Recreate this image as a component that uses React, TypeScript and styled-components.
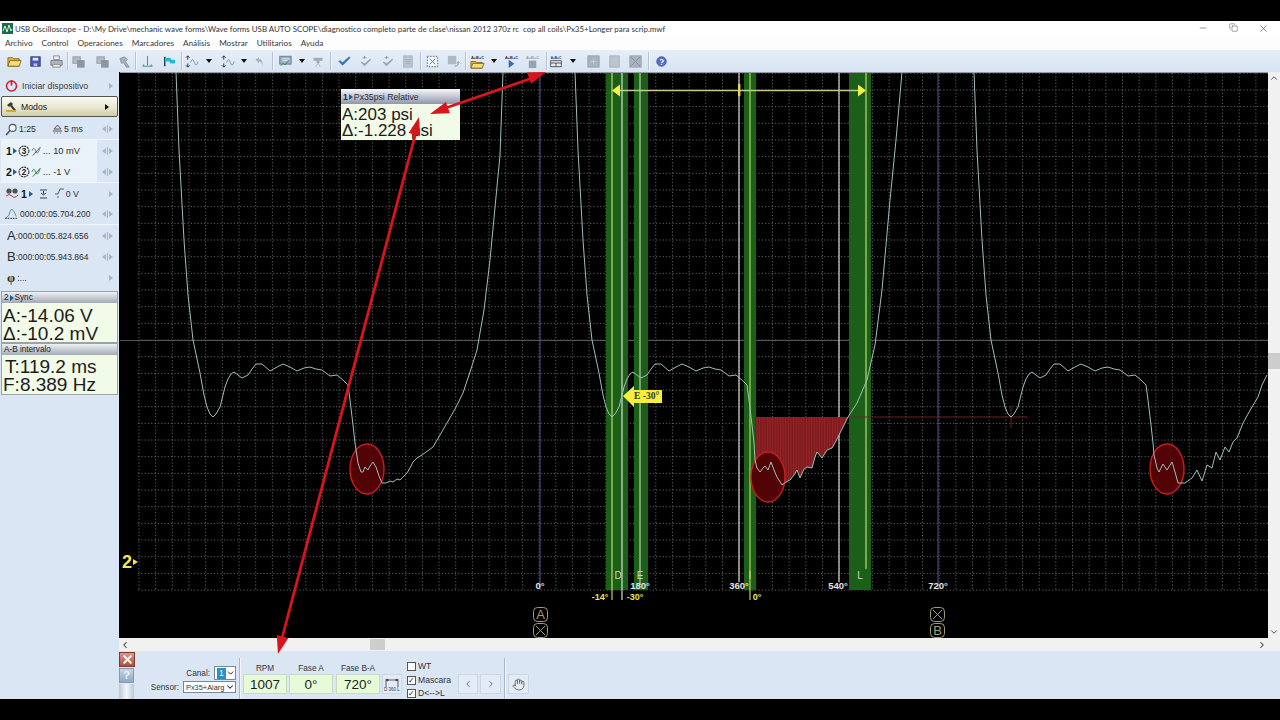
import React from "react";
import styled, { createGlobalStyle } from "styled-components";
import { Minus, Copy, X, ChevronDown, ChevronLeft, ChevronRight, ChevronUp, Hand } from "lucide-react";

const GlobalStyle = createGlobalStyle`
  html, body { margin: 0; padding: 0; background: #000; overflow: hidden; }
  * { box-sizing: border-box; }
`;

type Pt = [number, number];
const toPath = (pts: Pt[]) => pts.map((p, i) => `${i ? "L" : "M"}${p[0]} ${p[1]}`).join(" ");
const shift = (pts: Pt[], dx: number): Pt[] => pts.map(([x, y]) => [x + dx, y] as Pt);

// one cycle from the top of the screen, down the trough and over the plateau
const cycleHead: Pt[] = [
  [176, 72], [179, 150], [184, 240], [188, 295], [193, 340], [200, 373], [204, 395], [207, 407], [210, 414], [213, 417], [216, 414],
  [220, 407], [225, 387], [228, 379], [231, 374], [234, 372], [238, 375], [242, 378], [248, 375], [252, 369], [256, 364], [262, 364],
  [270, 371], [277, 367], [283, 364], [290, 367], [297, 371], [304, 368], [310, 367], [316, 369], [322, 370], [330, 376], [337, 375],
  [343, 380], [348, 385], [350, 400], [353, 425], [355, 443],
];
const smoothTail: Pt[] = [
  [358, 463], [361, 472], [363, 472], [365, 467], [368, 470], [370, 466], [373, 462], [376, 467], [379, 476], [382, 483], [386, 483], [390, 481],
  [393, 482], [397, 479], [400, 480], [404, 476], [407, 473], [410, 468], [413, 462], [417, 458], [422, 455], [433, 447], [440, 435],
  [447, 423], [455, 409], [463, 393], [470, 372], [477, 350], [484, 310], [490, 260], [500, 155], [503, 72],
];
const midTail: Pt[] = [
  [755, 460], [757, 468], [760, 472], [763, 468], [765, 466], [768, 470], [771, 462], [774, 470], [777, 477], [782, 485], [786, 482], [790, 480],
  [794, 475], [797, 470], [800, 478], [804, 469], [807, 467], [812, 468], [815, 457], [817, 452], [822, 458], [827, 450], [832, 448],
  [836, 441], [840, 433], [848, 417], [857, 403], [867, 380], [875, 345], [882, 290], [890, 200], [896, 140], [902, 72],
];
const lastTail: Pt[] = [
  [1154, 455], [1157, 468], [1159, 472], [1163, 464], [1167, 470], [1172, 462], [1175, 472], [1178, 483], [1185, 483], [1192, 478], [1197, 470],
  [1202, 481], [1207, 465], [1212, 468], [1216, 452], [1220, 460], [1225, 447], [1229, 452], [1233, 442], [1237, 438], [1243, 423],
  [1248, 414], [1252, 407], [1258, 397], [1262, 385], [1267, 375],
];
const waves = [
  [...cycleHead, ...smoothTail],
  [...shift(cycleHead, 399), ...midTail],
  [...shift(cycleHead, 798), ...lastTail],
];
const shade: Pt[] = [[755, 417], [848, 417], ...midTail.slice(0, 26).reverse()];

const bands = [[606, 22], [634, 14], [744, 12], [849, 22]];
const cursorLines = [
  { x: 612, to: 600, c: "#cbe874" }, { x: 622, to: 600, c: "#e8eee0" }, { x: 640, to: 585, c: "#c7d8c2" },
  { x: 739, to: 582, c: "#ececec" }, { x: 750, to: 600, c: "#bfe06a" }, { x: 839, to: 582, c: "#ececec" }, { x: 866, to: 569, c: "#cbe874" },
];
const gridX = Array.from({ length: 68 }, (_, i) => 139 + i * 16.67);
const gridY = Array.from({ length: 32 }, (_, i) => 73.3 + i * 16.67);

const arrowHead = (tip: Pt, from: Pt, len: number, wid: number) => {
  const dx = from[0] - tip[0];
  const dy = from[1] - tip[1];
  const d = Math.hypot(dx, dy);
  const ux = dx / d;
  const uy = dy / d;
  const bx = tip[0] + ux * len;
  const by = tip[1] + uy * len;
  return `${tip[0]},${tip[1]} ${bx - uy * wid},${by + ux * wid} ${bx + uy * wid},${by - ux * wid}`;
};

const AppFrame = styled.div`
  position: relative;
  width: 1280px;
  height: 720px;
  display: flex;
  flex-direction: column;
  background: #000;
  font-family: "Liberation Sans", Arial, sans-serif;
  color: #222;
`;
const Letterbox = styled.div`
  height: 21px;
  flex: none;
  background: #000;
`;
const TitleBar = styled.div`
  height: 15px;
  flex: none;
  background: #fff;
  display: flex;
  align-items: center;
  padding-left: 2px;
  gap: 2px;
  font-family: Lato, "Open Sans", sans-serif;
  font-size: 7.93px;
  color: #333;
  white-space: pre;
`;
const WinButtons = styled.div`
  margin-left: auto;
  display: flex;
  color: #333;
`;
const WinButton = styled.span`
  width: 30px;
  display: flex;
  justify-content: center;
  transform: translateX(-2px);
`;
const MenuBar = styled.div`
  height: 14px;
  flex: none;
  background: #fdfdfe;
  display: flex;
  align-items: center;
  padding-left: 5px;
  gap: 9px;
  font-family: Lato, "Open Sans", sans-serif;
  font-size: 8.2px;
  color: #3a3a3a;
`;
const Toolbar = styled.div`
  height: 22px;
  flex: none;
  background: linear-gradient(#e6eef8, #d8e4f3);
  display: flex;
  align-items: center;
  padding-left: 4px;
`;
const ToolSlot = styled.span<{ $w: number }>`
  width: ${(p) => p.$w}px;
  flex: none;
  display: flex;
  justify-content: center;
  align-items: center;
`;
const ToolSep = styled.span`
  width: 1px;
  height: 18px;
  background: #b6c2d2;
  box-shadow: 1px 0 0 #f3f7fc;
`;
const DropCaret = styled.span`
  width: 0;
  height: 0;
  border-left: 3.5px solid transparent;
  border-right: 3.5px solid transparent;
  border-top: 4px solid #111;
`;
const Main = styled.div`
  flex: 1;
  min-height: 0;
  display: flex;
`;
const Sidebar = styled.aside`
  width: 119px;
  flex: none;
  background: #dbe6f4;
  padding-top: 3px;
  display: flex;
  flex-direction: column;
  font-size: 8.7px;
  color: #2d2d2d;
`;
const SideRow = styled.div<{ $line?: boolean }>`
  height: 21px;
  flex: none;
  display: flex;
  align-items: center;
  gap: 2px;
  padding: 0 6px 0 5px;
  white-space: nowrap;
  border-bottom: ${(p) => (p.$line ? "1px solid #f2f6fb" : "none")};
`;
const LeadText = styled.span`
  margin-left: 2px;
  color: #3a3a3a;
`;
const ModeButton = styled.div`
  height: 21px;
  flex: none;
  margin: 0 1px;
  display: flex;
  align-items: center;
  gap: 3px;
  padding: 0 8px 0 3px;
  background: linear-gradient(#fbfbf6, #e9e7cf 55%, #cfcca8);
  border: 1px solid #55554a;
  border-radius: 2px;
  color: #222;
`;
const RowGap = styled.div`
  height: 2px;
  flex: none;
`;
const ChannelBlock = styled.div`
  flex: none;
  border-bottom: 1px solid #f2f6fb;
`;
const ChannelRow = styled.div`
  height: 21px;
  display: flex;
  align-items: center;
  padding-right: 6px;
`;
const ChannelBody = styled.div`
  width: 96px;
  height: 100%;
  margin-left: 1px;
  background: #e9f1f9;
  display: flex;
  align-items: center;
  gap: 1px;
  padding-left: 5px;
  font-size: 9.3px;
`;
const BigNum = styled.b`
  font-size: 10.5px;
  color: #111;
`;
const BlueTip = styled.span`
  width: 0;
  height: 0;
  border-top: 3px solid transparent;
  border-bottom: 3px solid transparent;
  border-left: 4px solid #1c5d94;
`;
const Stepper = styled.span`
  margin-left: auto;
  display: flex;
  align-items: center;
  gap: 1px;
`;
const Tri = styled.span<{ $left?: boolean; $dark?: boolean }>`
  width: 0;
  height: 0;
  border-top: 3.5px solid transparent;
  border-bottom: 3.5px solid transparent;
  border-left: ${(p) => (p.$left ? "none" : `4px solid ${p.$dark ? "#111" : "#a9b4c2"}`)};
  border-right: ${(p) => (p.$left ? "4px solid #a9b4c2" : "none")};
`;
const TriBar = styled.span`
  width: 1px;
  height: 8px;
  background: #a9b4c2;
`;
const SpacedValue = styled.span`
  margin-left: 14px;
  display: flex;
  align-items: center;
  gap: 1px;
`;
const TimeText = styled.span`
  font-size: 8.45px;
`;
const CursorName = styled.span`
  font-size: 13px;
  margin-left: 2px;
  margin-right: -2px;
`;
const PhiName = styled.span`
  font-family: "Liberation Serif", serif;
  font-weight: bold;
  font-size: 13px;
  margin-left: 2px;
`;
const Readout = styled.div<{ $first?: boolean }>`
  margin: ${(p) => (p.$first ? "3px" : "0")} 1px 0;
  width: 117px;
  flex: none;
  border: 1px solid #9aa2ac;
  background: #f2fae8;
`;
const ReadoutTitle = styled.div`
  height: 11px;
  background: linear-gradient(#eef1f5, #a3aab5);
  font-size: 8.2px;
  line-height: 11px;
  padding-left: 2px;
  color: #1e1e1e;
  display: flex;
  align-items: center;
  gap: 1px;
`;
const ReadoutBody = styled.div<{ $top: number }>`
  height: 39px;
  padding-top: ${(p) => p.$top}px;
`;
const ReadoutLine = styled.div<{ $pad?: number }>`
  font-size: 19px;
  line-height: 18px;
  padding-left: ${(p) => p.$pad ?? 1}px;
  color: #1c1c1c;
  white-space: nowrap;
`;
const Center = styled.div`
  flex: 1;
  min-width: 0;
  display: flex;
  flex-direction: column;
`;
const ScopeRow = styled.div`
  height: 566px;
  flex: none;
  display: flex;
`;
const Scope = styled.div`
  position: relative;
  flex: 1;
  margin-left: 1px;
  background: #000;
  overflow: hidden;
`;
const ScopeSvg = styled.svg`
  display: block;
  width: 1148px;
  height: 566px;
`;
const FloatPanel = styled.div`
  position: absolute;
  left: 221px;
  top: 17px;
  width: 119px;
  height: 51px;
  background: #f2fae8;
`;
const FloatTitle = styled.div`
  height: 15px;
  background: linear-gradient(#f6f7fa, #8f97ac);
  display: flex;
  align-items: center;
  gap: 1px;
  padding-left: 2px;
  font-size: 8.7px;
  color: #2b2b3a;
`;
const FloatBody = styled.div`
  padding: 3px 0 0 1px;
  font-size: 17px;
  line-height: 16px;
  color: #1c1c1c;
  white-space: nowrap;
`;
const VScroll = styled.div`
  width: 12px;
  flex: none;
  background: #f1f1f1;
  display: flex;
  flex-direction: column;
  align-items: center;
  justify-content: space-between;
  color: #333;
  padding: 1px 0;
`;
const VThumb = styled.div`
  width: 12px;
  height: 16px;
  background: #cdcdcd;
`;
const VSpace = styled.div<{ $h: number }>`
  height: ${(p) => p.$h}px;
  flex: none;
`;
const HScroll = styled.div`
  height: 13px;
  flex: none;
  background: #f1f1f1;
  display: flex;
  align-items: center;
  padding: 0 13px 0 1px;
  color: #333;
  justify-content: space-between;
`;
const HTrack = styled.div`
  flex: 1;
  display: flex;
  padding-left: 240px;
`;
const HThumb = styled.div`
  width: 15px;
  height: 11px;
  background: #cdcdcd;
`;
const BottomPanel = styled.div`
  height: 48px;
  flex: none;
  background: #dbe6f4;
  display: flex;
  font-size: 8.2px;
  color: #333;
`;
const CloseCol = styled.div`
  width: 16px;
  flex: none;
  display: flex;
  flex-direction: column;
  gap: 1px;
  padding-top: 1px;
`;
const CloseBtn = styled.div`
  width: 16px;
  height: 15px;
  background: linear-gradient(#d59a8e, #ab5040);
  border: 1px solid #7f3a30;
  color: #f5efe8;
  display: flex;
  align-items: center;
  justify-content: center;
`;
const HelpBtn = styled.div`
  width: 15px;
  height: 15px;
  background: linear-gradient(#c8d6e6, #8ea9c4);
  border: 1px solid #8899ad;
  color: #eef4fa;
  font-size: 11px;
  font-weight: bold;
  text-align: center;
  line-height: 13px;
`;
const GripStrip = styled.div`
  width: 15px;
  flex: 1;
  background: linear-gradient(90deg, #bcc8d6, #f3f6fa 50%, #bcc8d6);
`;
const SensorCol = styled.div`
  width: 101px;
  flex: none;
  display: flex;
  flex-direction: column;
  align-items: flex-end;
  padding-top: 15px;
  gap: 1px;
`;
const SensorRow = styled.div`
  display: flex;
  align-items: center;
  gap: 4px;
`;
const PickBox = styled.div<{ $w: number }>`
  width: ${(p) => p.$w}px;
  height: ${(p) => (p.$w < 30 ? 14 : 12)}px;
  background: #fff;
  border: 1px solid #7a8794;
  display: flex;
  align-items: center;
  justify-content: space-between;
  font-size: 7.4px;
  padding-left: 2px;
  overflow: hidden;
  color: #333;
  white-space: nowrap;
`;
const PickMark = styled.span`
  background: #2d8fc6;
  color: #dff;
  padding: 0 2px;
  font-size: 8.5px;
  line-height: 11px;
`;
const Divider = styled.div<{ $left: number; $right: number }>`
  width: 1px;
  flex: none;
  margin: 7px ${(p) => p.$right}px 0 ${(p) => p.$left}px;
  background: #aab6c5;
  box-shadow: 1px 0 0 #f3f7fc;
`;
const FieldCol = styled.div<{ $gap: number }>`
  width: 44px;
  flex: none;
  margin-right: ${(p) => p.$gap}px;
  padding-top: 13px;
  text-align: center;
`;
const FieldLabel = styled.div`
  height: 10px;
  line-height: 10px;
`;
const FieldValue = styled.div`
  height: 20px;
  line-height: 20px;
  background: #e6fbd8;
  border: 1px solid #cbd8c4;
  font-size: 13.5px;
  color: #1e1e1e;
`;
const SquareBtn = styled.div<{ $w?: number; $ml?: number }>`
  width: ${(p) => p.$w ?? 20}px;
  height: 20px;
  flex: none;
  margin: 23px 0 0 ${(p) => p.$ml ?? 0}px;
  background: #e3ebf6;
  border: 1px solid #cdd7e4;
  display: flex;
  align-items: center;
  justify-content: center;
  color: #555;
`;
const CheckCol = styled.div`
  width: 50px;
  flex: none;
  margin-left: 5px;
  padding-top: 11px;
  display: flex;
  flex-direction: column;
  gap: 4px;
`;
const CheckRow = styled.div`
  height: 9.5px;
  display: flex;
  align-items: center;
  gap: 2px;
  font-size: 8.6px;
  line-height: 9px;
`;
const CheckBox = styled.span`
  width: 9px;
  height: 9px;
  flex: none;
  background: #fff;
  border: 1px solid #555;
  font-size: 8px;
  line-height: 7px;
  text-align: center;
  color: #111;
  display: flex;
  align-items: center;
  justify-content: center;
`;
const ArrowLayer = styled.svg`
  position: absolute;
  inset: 0;
  width: 1280px;
  height: 720px;
  pointer-events: none;
`;

const ic: Record<string, React.ReactNode> = {
  folder: (<><path d="M1 4h5l1 1h6v8H1z" fill="#e8b93c" stroke="#8a6a1c" /><path d="M3 7h12l-2 6H1z" fill="#f6dc7a" stroke="#8a6a1c" /></>),
  save: (<><rect x="3" y="3" width="10" height="10" fill="#4a5ab0" stroke="#333c7a" /><rect x="5" y="4" width="6" height="3" fill="#e8e8f4" /><rect x="6" y="10" width="4" height="3" fill="#b5bad8" /></>),
  print: (<><path d="M5 2h6v4H5z" fill="#f3f3f3" stroke="#888" /><path d="M2 7h12v5H2z" fill="#b3b8be" stroke="#7b7f86" /><path d="M4 11h8v3H4z" fill="#eee" stroke="#888" /></>),
  copyA: (<><rect x="2" y="3" width="8" height="7" fill="#b3bac3" stroke="#99a1ab" /><rect x="7" y="7" width="7" height="7" fill="#8d959f" stroke="#8d959f" /></>),
  hammer: (<><path d="M3 5l5-2 3 3-2 2 4 6h-3L7 9 5 10z" fill="#a8b0ba" stroke="#8d959f" /></>),
  cursor: (<><path d="M8 2v10M3 13h10M3 13l1-2M13 13l-1-2" stroke="#3f8f74" fill="none" /></>),
  flag: (<><path d="M4 3v10" stroke="#1c3a55" strokeWidth="1.5" /><path d="M5 4h5l1 2h4v4h-5L9 8H5z" fill="#27b6dc" /></>),
  sigA: (<><path d="M4 2v4M2 4l2-2 2 2M4 14v-4M2 12l2 2 2-2" stroke="#333" fill="none" /><path d="M7 9q2-6 4 0t4-1" stroke="#7b94a8" fill="none" /></>),
  undo: (<><path d="M4 6l4-3v2q5 0 4 8-1-5-4-5v2z" fill="#a8b0ba" /></>),
  chart: (<><rect x="2" y="2" width="13" height="9" fill="#9fb1c6" stroke="#66788e" /><path d="M3 13l3-3 2 2 4-5" stroke="#2a8c4a" fill="none" /><path d="M5 5h8M5 7h6" stroke="#e8eef5" /></>),
  proj: (<><path d="M2 3h12v4H2zM6 7h4v3H6z" fill="#a3abb5" /><path d="M8 10l-3 5M8 10l3 5" stroke="#a3abb5" /></>),
  check: (<><path d="M2 8l4 4 8-8-1-1-7 6-3-2z" fill="#2e7cc4" stroke="#1f5f9c" strokeWidth=".5" /></>),
  checkG: (<><path d="M7 2v3M5 4h4" stroke="#8c96a3" /><path d="M3 9l4 4 7-7-1-1-6 5-3-2z" fill="#9aa4b0" /></>),
  doc: (<><rect x="4" y="2" width="9" height="12" fill="#bcc4ce" stroke="#a8b0ba" /><path d="M6 6h5M6 8h5M6 10h5" stroke="#a8b0ba" /></>),
  dots: (<><rect x="2.5" y="2.5" width="11" height="11" fill="#f4f8fc" stroke="#555" strokeDasharray="1.5 1.5" /><path d="M5 5l6 6M11 5l-6 6" stroke="#3f8f74" /></>),
  arrowDoc: (<><rect x="2" y="2" width="9" height="9" fill="#b0b8c2" /><path d="M9 13q5 0 4-4M12 10l1-2 2 2" stroke="#8c96a3" fill="none" /></>),
  abcFolder: (<><text x="1" y="5" fontSize="4.2" fontWeight="bold" fill="#1d2a50" fontFamily="Liberation Sans">A+B+C</text><path d="M1 8h5l1 1h6v6H1z" fill="#e8b93c" stroke="#8a6a1c" /><path d="M3 10h12l-2 5H1z" fill="#f6dc7a" stroke="#8a6a1c" /></>),
  abcPlay: (<><text x="1" y="5" fontSize="4.2" fontWeight="bold" fill="#1d2a50" fontFamily="Liberation Sans">A+B+C</text><path d="M5 6v9l6-4.5z" fill="#2f6fb0" /></>),
  abcStop: (<><text x="1" y="5" fontSize="4.2" fontWeight="bold" fill="#8f9aa8" fontFamily="Liberation Sans">A+B+C</text><rect x="4" y="7" width="8" height="8" fill="#98a2ae" /></>),
  abcTable: (<><text x="1" y="5" fontSize="4.2" fontWeight="bold" fill="#1d2a50" fontFamily="Liberation Sans">A+B+C</text><rect x="1" y="7" width="14" height="8" fill="#e6ebf2" stroke="#333" /><path d="M1 10h14" stroke="#333" /><path d="M8 10v5" stroke="#333" /></>),
  gridA: (<><rect x="2" y="2" width="12" height="12" fill="#a9b3bf" stroke="#98a2ae" /><path d="M5 8h6M8 5v6" stroke="#c5cdd7" /></>),
  gridB: (<><rect x="3" y="2" width="10" height="12" fill="#bcc4ce" stroke="#a8b0ba" /></>),
  gridC: (<><rect x="2" y="2" width="12" height="12" fill="#a9b3bf" stroke="#98a2ae" /><path d="M3 3l10 10M13 3L3 13" stroke="#8590a0" /></>),
  help: (<><circle cx="8" cy="8" r="5" fill="#5a72c4" stroke="#3a4f96" /><path d="M6.5 6.5q1.5-1.5 3 0t-1.5 2.5v.5" stroke="#fff" fill="none" strokeWidth="1.1" /><circle cx="8" cy="11" r=".7" fill="#fff" /></>),
};

const Ico = ({ n, s = 15 }: { n: string; s?: number }) => (
  <svg width={s} height={s} viewBox="0 0 16 16">{ic[n]}</svg>
);

const toolItems: [string, number][] = [
  ["folder", 20], ["save", 22], ["print", 20], ["|", 2], ["copyA", 20], ["copyA", 28], ["hammer", 16], ["|", 6],
  ["cursor", 18], ["flag", 24], ["|", 2], ["sigA", 18], ["v", 18], ["sigA", 18], ["v", 16], ["undo", 14], ["|", 12],
  ["chart", 14], ["v", 20], ["proj", 12], ["|", 12], ["check", 16], ["checkG", 26], ["checkG", 18], ["doc", 22], ["|", 4],
  ["dots", 20], ["arrowDoc", 22], ["|", 2], ["abcFolder", 22], ["v", 12], ["abcPlay", 22], ["abcStop", 20], ["|", 8],
  ["abcTable", 12], ["v", 22], ["gridA", 18], ["gridB", 24], ["gridC", 18], ["|", 8], ["help", 18],
];

const AppLogo = () => (
  <svg width="11" height="11" viewBox="0 0 11 11">
    <rect width="11" height="11" fill="#1d6b4f" />
    <path d="M1 8l2-5 2 6 2-7 2 6 1-2" stroke="#d8f2c8" fill="none" />
  </svg>
);
const PowerIcon = () => (
  <svg width="13" height="13" viewBox="0 0 12 12">
    <circle cx="6" cy="6.5" r="4.6" fill="none" stroke="#cf2027" strokeWidth="1.4" />
    <path d="M6 1v5" stroke="#cf2027" strokeWidth="1.6" />
  </svg>
);
const HammerIcon = () => (
  <svg width="13" height="13" viewBox="0 0 13 13">
    <path d="M2 5l4-3 2 2-1 1 4 5-2 1-4-5-1 1z" fill="#3b3b30" />
    <path d="M1 11h10" stroke="#d8a63c" strokeWidth="2" />
  </svg>
);
const ZoomIcon = () => (
  <svg width="12" height="13" viewBox="0 0 11 12">
    <circle cx="7" cy="4.5" r="3.2" fill="#eef4fa" stroke="#4a5563" />
    <path d="M4.5 7L1 11" stroke="#4a5563" strokeWidth="1.5" />
  </svg>
);
const TimeIcon = () => (
  <svg width="11" height="11" viewBox="0 0 11 11">
    <path d="M5.5 1L2 5h7zM1 7h9M2 9h1M5 9h1M8 9h1" stroke="#555" fill="none" />
  </svg>
);
const RingNum = ({ n }: { n: number }) => (
  <svg width="12" height="12" viewBox="0 0 11 11">
    <circle cx="5.5" cy="5.5" r="4.5" fill="none" stroke="#333" strokeDasharray="2 .6" />
    <text x="5.5" y="8.2" fontSize="7.5" textAnchor="middle" fontFamily="Liberation Sans" fontWeight="bold" fill="#222">{n}</text>
  </svg>
);
const CoupleIcon = ({ c }: { c: string }) => (
  <svg width="11" height="12" viewBox="0 0 12 12">
    <path d="M1 6q2-6 4 0t5-4" stroke={c} fill="none" />
    <path d="M2 11L10 2" stroke="#555" />
  </svg>
);
const BinocIcon = () => (
  <svg width="14" height="13" viewBox="0 0 14 13">
    <circle cx="4" cy="4" r="2.6" fill="#55504a" />
    <circle cx="10" cy="4" r="2.6" fill="#55504a" />
    <path d="M1 9q3-3 6 0t6-1" stroke="#b03c38" fill="none" />
  </svg>
);
const SlopeIcon = () => (
  <svg width="9" height="10" viewBox="0 0 9 10">
    <path d="M1 1h7M4.5 2v3M2 4l2.5 2L7 4M1 9h7" stroke="#345" fill="none" />
  </svg>
);
const LevelIcon = () => (
  <svg width="9" height="11" viewBox="0 0 9 11">
    <path d="M0 6h3l2-5h4M3 8v2" stroke="#3f6b52" fill="none" />
  </svg>
);
const TrigTimeIcon = () => (
  <svg width="13" height="12" viewBox="0 0 15 12">
    <path d="M1 10q3 0 5-7t7 6" stroke="#3f8f74" fill="none" />
    <path d="M0 11h15" stroke="#222" strokeDasharray="2 1" />
  </svg>
);
const SpanIcon = () => (
  <svg width="16" height="16" viewBox="0 0 16 16">
    <path d="M2 3v8M14 3v8M2 4h12M2 4l2-1v2zM14 4l-2-1v2z" stroke="#333" fill="none" strokeWidth=".8" />
    <text x="8" y="15" fontSize="4.5" textAnchor="middle" fontFamily="Liberation Sans" fill="#333">D 360 L</text>
  </svg>
);

const Pair = () => (
  <Stepper>
    <Tri $left />
    <TriBar />
    <Tri />
  </Stepper>
);
const One = () => (
  <Stepper>
    <Tri />
  </Stepper>
);

function ScopeDrawing() {
  return (
    <ScopeSvg viewBox="120 72 1148 566">
      <defs>
        <pattern id="hatch" width="2.6" height="4" patternUnits="userSpaceOnUse">
          <rect width="2.6" height="4" fill="#7d1a1c" />
          <rect width="1" height="4" fill="#94262a" />
        </pattern>
      </defs>
      <path d="M120 72.5H1268" stroke="#9a9fa6" />
      {gridY.map((y) => (
        <path key={y} d={`M138 ${y}H1268`} stroke="#626262" strokeWidth="1" strokeDasharray="1.2 2.1" />
      ))}
      {gridX.map((x) => (
        <path key={x} d={`M${x} 73V590`} stroke="#626262" strokeWidth="1" strokeDasharray="1.2 2.1" />
      ))}
      <path d="M120 340.5H1268" stroke="#4f5560" />
      <path d="M540 73V590M938 73V590" stroke="#56568e" />
      {bands.map(([x, w]) => (
        <rect key={x} x={x} y="73" width={w} height="517" fill="#1c5f18" />
      ))}
      {cursorLines.map((l) => (
        <path key={l.x} d={`M${l.x} 73V${l.to}`} stroke={l.c} strokeWidth="1.1" />
      ))}

      <path d="M848 417H1028" stroke="#6e2222" />
      <path d="M1011 406V428" stroke="#6e2222" />
      <polygon points={shade.map((p) => p.join(",")).join(" ")} fill="url(#hatch)" />
      {[[367, 469], [768, 477], [1167, 469]].map(([cx, cy]) => (
        <ellipse key={cx} cx={cx} cy={cy} rx="17" ry="25" fill="#520305" stroke="#c41f22" strokeWidth="1.4" />
      ))}
      {waves.map((w, i) => (
        <path key={i} d={toPath(w)} fill="none" stroke="#9dbfbc" strokeWidth="1" strokeLinejoin="round" />
      ))}

      <path d="M618 90.5H860" stroke="#c4c88c" strokeWidth="1.4" />
      <path d="M612 90.5l8-6v12zM866 90.5l-8-6v12z" fill="#f2f24a" />
      <rect x="738" y="84" width="2.4" height="12" fill="#e3d94f" />

      <path d="M623 396l11-10v4h28v13h-28v4z" fill="#f4ee3e" />
      <text x="634" y="399" fontFamily="Liberation Serif" fontWeight="bold" fontSize="9.5" fill="#333">E -30°</text>

      <g fontFamily="Liberation Sans" fontSize="10" textAnchor="middle" fill="#cfd8bc">
        <text x="618" y="579">D</text>
        <text x="640" y="579">E</text>
        <text x="750" y="579">I</text>
        <text x="860" y="579">L</text>
      </g>
      <g fontFamily="Liberation Sans" fontSize="9.5" fontWeight="bold" textAnchor="middle" fill="#e4e4e4">
        <text x="540" y="589">0°</text>
        <text x="640" y="589">180°</text>
        <text x="739" y="589">360°</text>
        <text x="838" y="589">540°</text>
        <text x="938" y="589">720°</text>
      </g>
      <g fontFamily="Liberation Sans" fontSize="9" fontWeight="bold" textAnchor="middle" fill="#e8e85e">
        <text x="600" y="600">-14°</text>
        <text x="635" y="600">-30°</text>
        <text x="757" y="600">0°</text>
      </g>

      <g fontFamily="Liberation Sans" fontSize="13" textAnchor="middle" fill="#a29e74">
        <rect x="533.5" y="607.5" width="14" height="14" rx="4" fill="none" stroke="#a29e74" />
        <text x="540.5" y="619">A</text>
        <rect x="533.5" y="623.5" width="14" height="14" rx="4" fill="none" stroke="#a29e74" />
        <path d="M536 626l9 9M545 626l-9 9" stroke="#a29e74" />
        <rect x="930.5" y="607.5" width="14" height="14" rx="4" fill="none" stroke="#a29e74" />
        <path d="M933 610l9 9M942 610l-9 9" stroke="#a29e74" />
        <rect x="930.5" y="623.5" width="14" height="14" rx="4" fill="none" stroke="#a29e74" />
        <text x="937.5" y="635">B</text>
      </g>

      <text x="122" y="568" fontFamily="Liberation Sans" fontWeight="bold" fontSize="18" fill="#f2e85a">2</text>
      <path d="M133 559l5 3-5 3z" fill="#f2e85a" />
    </ScopeSvg>
  );
}

export default function App() {
  return (
    <AppFrame>
      <GlobalStyle />
      <Letterbox />
      <TitleBar>
        <AppLogo />
        {"USB Oscilloscope - D:\\My Drive\\mechanic wave forms\\Wave forms USB AUTO SCOPE\\diagnostico completo parte de clase\\nissan 2012 370z rc  cop all coils\\Px35+Longer para scrip.mwf"}
        <WinButtons>
          <WinButton><Minus size={10} strokeWidth={1.2} /></WinButton>
          <WinButton><Copy size={9} strokeWidth={1.2} /></WinButton>
          <WinButton><X size={11} strokeWidth={1.2} /></WinButton>
        </WinButtons>
      </TitleBar>
      <MenuBar>
        <span>Archivo</span>
        <span>Control</span>
        <span>Operaciones</span>
        <span>Marcadores</span>
        <span>Análisis</span>
        <span>Mostrar</span>
        <span>Utilitarios</span>
        <span>Ayuda</span>
      </MenuBar>
      <Toolbar>
        {toolItems.map(([n, w], i) =>
          n === "|" ? (
            <ToolSlot key={i} $w={w}><ToolSep /></ToolSlot>
          ) : n === "v" ? (
            <ToolSlot key={i} $w={w}><DropCaret /></ToolSlot>
          ) : (
            <ToolSlot key={i} $w={w}><Ico n={n} /></ToolSlot>
          )
        )}
      </Toolbar>
      <Main>
        <Sidebar>
          <SideRow>
            <PowerIcon />
            <LeadText>Iniciar dispositivo</LeadText>
            <One />
          </SideRow>
          <ModeButton>
            <HammerIcon />
            <span>Modos</span>
            <Stepper><Tri $dark /></Stepper>
          </ModeButton>
          <RowGap />
          <SideRow $line>
            <ZoomIcon />
            <span>1:25</span>
            <SpacedValue><TimeIcon />5 ms</SpacedValue>
            <Pair />
          </SideRow>
          <ChannelBlock>
            <ChannelRow>
              <ChannelBody>
                <BigNum>1</BigNum><BlueTip /><RingNum n={3} /><CoupleIcon c="#6a7f8c" />
                <span>... 10 mV</span>
              </ChannelBody>
              <Pair />
            </ChannelRow>
            <ChannelRow>
              <ChannelBody>
                <BigNum>2</BigNum><BlueTip /><RingNum n={2} /><CoupleIcon c="#2b9a4a" />
                <span>... -1 V</span>
              </ChannelBody>
              <Pair />
            </ChannelRow>
          </ChannelBlock>
          <SideRow>
            <BinocIcon />
            <BigNum>1</BigNum><BlueTip />&nbsp;<SlopeIcon />&nbsp;<LevelIcon />
            <span>0 V</span>
            <One />
          </SideRow>
          <SideRow $line>
            <TrigTimeIcon />
            <TimeText>000:00:05.704.200</TimeText>
            <Pair />
          </SideRow>
          <SideRow>
            <CursorName>A</CursorName>
            <TimeText>:000:00:05.824.656</TimeText>
            <Pair />
          </SideRow>
          <SideRow>
            <CursorName>B</CursorName>
            <TimeText>:000:00:05.943.864</TimeText>
            <Pair />
          </SideRow>
          <SideRow>
            <PhiName>φ</PhiName>
            <span>:...</span>
            <One />
          </SideRow>
          <Readout $first>
            <ReadoutTitle>2<BlueTip />Sync</ReadoutTitle>
            <ReadoutBody $top={4}>
              <ReadoutLine>A:-14.06 V</ReadoutLine>
              <ReadoutLine>Δ:-10.2 mV</ReadoutLine>
            </ReadoutBody>
          </Readout>
          <Readout>
            <ReadoutTitle>A-B intervalo</ReadoutTitle>
            <ReadoutBody $top={3}>
              <ReadoutLine $pad={3}>T:119.2 ms</ReadoutLine>
              <ReadoutLine>F:8.389 Hz</ReadoutLine>
            </ReadoutBody>
          </Readout>
        </Sidebar>
        <Center>
          <ScopeRow>
            <Scope>
              <ScopeDrawing />
              <FloatPanel>
                <FloatTitle><b>1</b><BlueTip />Px35psi Relative</FloatTitle>
                <FloatBody>
                  A:203 psi
                  <br />
                  Δ:-1.228 psi
                </FloatBody>
              </FloatPanel>
            </Scope>
            <VScroll>
              <ChevronUp size={10} />
              <VSpace $h={267} />
              <VThumb />
              <VSpace $h={255} />
              <ChevronDown size={10} />
            </VScroll>
          </ScopeRow>
          <HScroll>
            <ChevronLeft size={10} strokeWidth={2.5} />
            <HTrack><HThumb /></HTrack>
            <ChevronRight size={10} strokeWidth={2.5} />
          </HScroll>
          <BottomPanel>
            <CloseCol>
              <CloseBtn><X size={13} strokeWidth={4} /></CloseBtn>
              <HelpBtn>?</HelpBtn>
              <GripStrip />
            </CloseCol>
            <SensorCol>
              <SensorRow>
                <span>Canal:</span>
                <PickBox $w={22}><PickMark>1</PickMark><ChevronDown size={10} strokeWidth={2.5} color="#223" /></PickBox>
              </SensorRow>
              <SensorRow>
                <span>Sensor:</span>
                <PickBox $w={53}>Px35+Alarg<ChevronDown size={10} strokeWidth={2.5} color="#223" /></PickBox>
              </SensorRow>
            </SensorCol>
            <Divider $left={3} $right={3} />
            <FieldCol $gap={2}><FieldLabel>RPM</FieldLabel><FieldValue>1007</FieldValue></FieldCol>
            <FieldCol $gap={3}><FieldLabel>Fase A</FieldLabel><FieldValue>0°</FieldValue></FieldCol>
            <FieldCol $gap={2}><FieldLabel>Fase B-A</FieldLabel><FieldValue>720°</FieldValue></FieldCol>
            <SquareBtn><SpanIcon /></SquareBtn>
            <CheckCol>
              <CheckRow><CheckBox />WT</CheckRow>
              <CheckRow><CheckBox>✓</CheckBox>Mascara</CheckRow>
              <CheckRow><CheckBox>✓</CheckBox>D&lt;--&gt;L</CheckRow>
            </CheckCol>
            <SquareBtn $ml={1}><ChevronLeft size={10} /></SquareBtn>
            <SquareBtn $ml={2} $w={21}><ChevronRight size={10} /></SquareBtn>
            <Divider $left={3} $right={3} />
            <SquareBtn $w={21}><Hand size={13} strokeWidth={1.2} color="#333" /></SquareBtn>
          </BottomPanel>
        </Center>
      </Main>
      <Letterbox />
      <ArrowLayer viewBox="0 0 1280 720">
        <path d="M440 110L534 77.5M416 132L281 642" stroke="#d8141c" strokeWidth="2.8" fill="none" />
        <polygon points={arrowHead([430, 114], [545, 73], 19, 6)} fill="#d8141c" />
        <polygon points={arrowHead([546, 72], [430, 114], 18, 6)} fill="#d8141c" />
        <polygon points={arrowHead([419, 117], [278, 654], 18, 6)} fill="#d8141c" />
        <polygon points={arrowHead([278, 654], [419, 117], 18, 6)} fill="#d8141c" />
      </ArrowLayer>
    </AppFrame>
  );
}
